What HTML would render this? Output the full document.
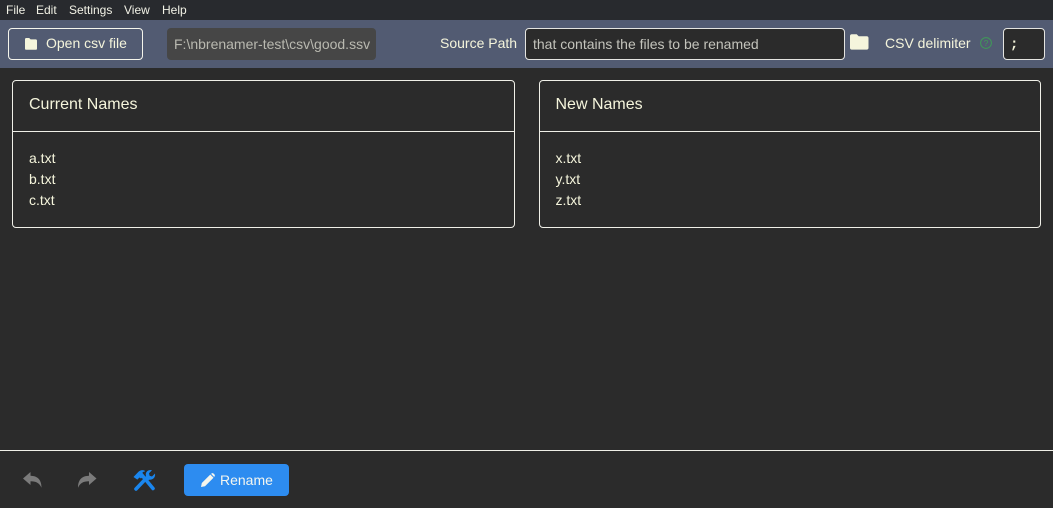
<!DOCTYPE html>
<html><head><meta charset="utf-8"><style>
*{box-sizing:border-box}
html,body{margin:0;padding:0;width:1053px;height:508px;overflow:hidden;background:#2b2b2b;font-family:"Liberation Sans",sans-serif;color:#f5f5dc}
.a{position:absolute;white-space:nowrap}
.m{top:3px;font-size:12px;line-height:15px;color:#f2f2e6}
.card{position:absolute;top:80px;height:148px;border:1px solid #f0f0e8;border-radius:4px}
.card .h{position:absolute;left:0;right:0;top:0;height:51px;border-bottom:1px solid #f0f0e8}
.card .t{position:absolute;left:16px;top:14px;font-size:16px;line-height:20px}
.card .l{position:absolute;left:16px;top:67px;font-size:14px;line-height:21px}
</style></head><body>
<div class="a" style="left:0;top:0;width:1053px;height:20px;background:#282a2e"></div>
<div class="a m" style="left:6px">File</div>
<div class="a m" style="left:36px">Edit</div>
<div class="a m" style="left:69px">Settings</div>
<div class="a m" style="left:124px">View</div>
<div class="a m" style="left:162px">Help</div>
<div class="a" style="left:0;top:20px;width:1053px;height:48px;background:#525b72"></div>

<div class="a" style="left:8px;top:28px;width:135px;height:32px;border:1px solid #f5f5ec;border-radius:4px"></div>
<svg class="a" style="left:24px;top:38px" width="14" height="12" viewBox="0 0 14 12"><path d="M1 1.200C1 .5 1.500 0 2.200 0h3l1.400 1.400h5.200c.7 0 1.200.5 1.200 1.200v8c0 .7-.5 1.200-1.200 1.200H2.200C1.500 11.800 1 11.300 1 10.600z" fill="#f5f5dc"/></svg>
<div class="a" style="left:46px;top:35px;font-size:14px;line-height:17px">Open csv file</div>

<div class="a" style="left:167px;top:28px;width:209px;height:32px;background:#464646;border-radius:4px"></div>
<div class="a" style="left:174px;top:35px;width:197px;overflow:hidden;font-size:14px;line-height:18px;color:#b9b9b0">F:\nbrenamer-test\csv\good.ssv</div>

<div class="a" style="left:440px;top:35px;font-size:14px;line-height:17px">Source Path</div>
<div class="a" style="left:525px;top:28px;width:320px;height:32px;background:#2b2b2b;border:1px solid #e4e4e0;border-radius:4px"></div>
<div class="a" style="left:533px;top:35px;font-size:14px;line-height:18px;color:#c4c4bc">that contains the files to be renamed</div>
<svg class="a" style="left:850px;top:34px" width="19" height="16" viewBox="0 0 19 16"><path d="M0 2C0 1 .7.300 1.700.300h5l2 2h8.100c1 0 1.700.7 1.700 1.700v9.900c0 1-.7 1.700-1.700 1.700H1.700C.7 15.600 0 14.900 0 13.900z" fill="#f5f5dc"/></svg>
<div class="a" style="left:885px;top:35px;font-size:14px;line-height:17px">CSV delimiter</div>
<svg class="a" style="left:980px;top:37px" width="12" height="12" viewBox="0 0 12 12"><circle cx="6" cy="6" r="5.400" fill="none" stroke="#3f9a58" stroke-width="1"/><text x="6" y="9" text-anchor="middle" font-family="Liberation Sans" font-size="8.500" fill="#3f9a58">?</text></svg>
<div class="a" style="left:1003px;top:28px;width:42px;height:32px;background:#2b2b2b;border:1px solid #e4e4e0;border-radius:4px"></div>
<div class="a" style="left:1010px;top:36px;font-family:'Liberation Mono',monospace;font-size:14px;font-weight:bold;line-height:18px;color:#f5f5dc">;</div>

<div class="card" style="left:12px;width:503px"><div class="h"></div><div class="t">Current Names</div><div class="l">a.txt<br>b.txt<br>c.txt</div></div>
<div class="card" style="left:539px;width:502px"><div class="h"></div><div class="t" style="left:15.500px">New Names</div><div class="l" style="left:15.500px">x.txt<br>y.txt<br>z.txt</div></div>

<div class="a" style="left:0;top:450px;width:1053px;height:1px;background:#f0f0e8"></div>
<svg class="a" style="left:23px;top:472px" width="19" height="16" viewBox="0 0 19 16"><path d="M0 6.500 7.500 0v3.700C13.500 3.900 18.500 6.500 18.500 15.800 16.500 11 13 9.300 7.500 9.300V13z" fill="#7b7b7b"/></svg>
<svg class="a" style="left:78px;top:472px" width="19" height="16" viewBox="0 0 19 16"><path d="M18.500 6.500 11 0v3.700C5 3.900 0 6.500 0 15.800 2 11 5.500 9.300 11 9.300V13z" fill="#7b7b7b"/></svg>
<svg class="a" style="left:133px;top:469px" width="23" height="22" viewBox="0 0 23 22"><g fill="none" stroke="#1a86ee" stroke-linecap="round"><path d="M3 20 13.500 9" stroke-width="3.600"/><path d="M8 5 20 19.500" stroke-width="3.600"/></g><path d="M.5 8 5 3.300C6.500 1.500 9 .5 11.500 1.500L12 2.500C10 2.600 8.800 3.800 9.300 5.500L10.500 7 8 9.500 6.500 8.500 4.300 10.600z" fill="#1a86ee"/><path d="M22 4.500 19 7.500 16.600 6.800 16 4.300 19 1.200C16.300.3 13.300 1.800 12.800 4.800 12.600 6 12.900 7.200 13.500 8.200L11.500 10.500 14 13 16 10.700C18.800 11.200 22.800 9.200 22 4.500z" fill="#1a86ee"/></svg>

<div class="a" style="left:184px;top:464px;width:105px;height:32px;background:#2d8cf0;border-radius:4px"></div>
<svg class="a" style="left:201px;top:473px" width="14" height="14" viewBox="0 0 14 14"><path d="M0 14 .8 10 9.300 1.500 12.500 4.700 4 13.200zM10.200.7C11 0 11.800 0 12.500.5L13.500 1.500C14 2.200 14 3 13.300 3.800L13.200 4 10 .8z" fill="#f5f5ec"/></svg>
<div class="a" style="left:220px;top:472px;font-size:14px;line-height:17px;color:#f3f6f0">Rename</div>
</body></html>
